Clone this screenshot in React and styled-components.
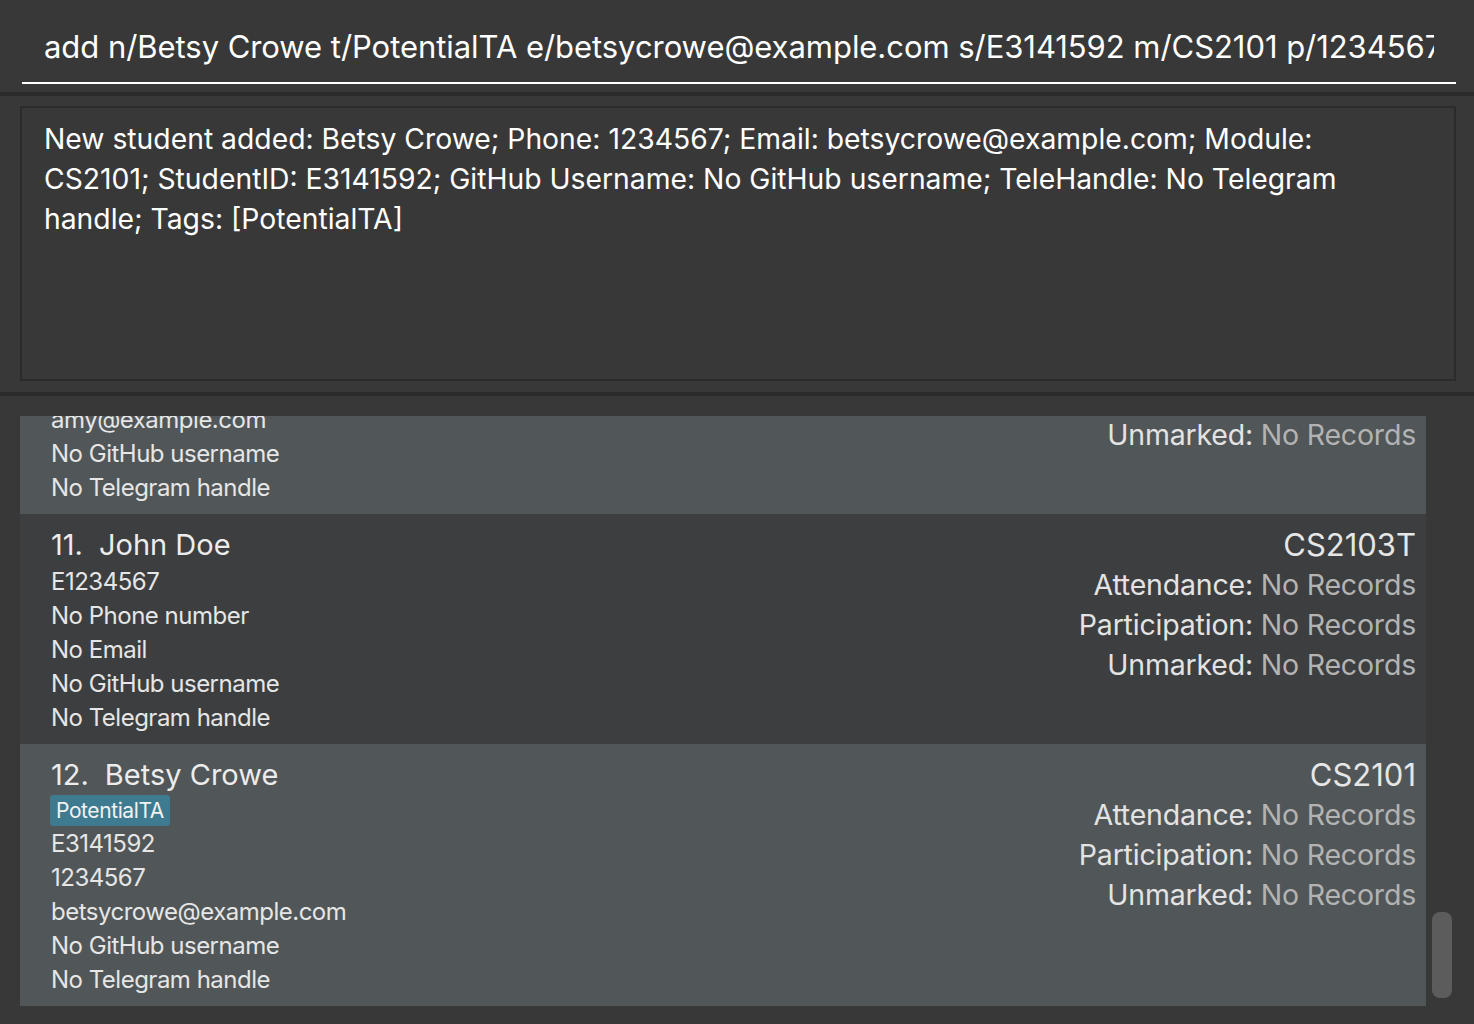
import React from 'react'
import styled, { createGlobalStyle } from 'styled-components'

const GlobalStyle = createGlobalStyle`
  html, body {
    margin: 0;
    padding: 0;
    background: #383838;
  }
  body {
    font-family: Inter, "Noto Sans", "Liberation Sans", sans-serif;
  }
`;

const Window = styled.div`
  width: 1474px;
  height: 1024px;
  background: #383838;
  display: flex;
  flex-direction: column;
  overflow: hidden;
`;

const CommandSection = styled.div`
  height: 92px;
  padding: 10px 18px 0 22px;
  box-sizing: border-box;
`;

const CommandField = styled.div`
  height: 72px;
  border-bottom: 2px solid #ffffff;
  padding-left: 22px;
  display: flex;
  align-items: center;
  overflow: hidden;
  white-space: nowrap;
  color: #ffffff;
  font-size: 31px;
  letter-spacing: -0.05px;
`;

const CommandText = styled.span`
  display: block;
  width: 1390px;
  overflow: hidden;
  flex-shrink: 0;
`;

const Divider = styled.div`
  height: 4px;
  background: #2b2b2b;
  flex-shrink: 0;
`;

const ResultSection = styled.div`
  padding: 10px 18px 11px 20px;
`;

const ResultBox = styled.div`
  height: 275px;
  box-sizing: border-box;
  border: 2px solid #2b2b2b;
  padding: 11px 84px 0 22px;
  color: #ffffff;
  font-size: 28.3px;
  line-height: 40px;
`;

const ListSection = styled.div`
  flex: 1;
  min-height: 0;
  display: flex;
  padding: 20px 0 18px 20px;
`;

const Viewport = styled.div`
  width: 1406px;
  overflow: hidden;
  display: flex;
  flex-direction: column;
  justify-content: flex-end;
`;

const ScrollTrack = styled.div`
  flex: 1;
  display: flex;
  flex-direction: column;
  justify-content: flex-end;
  padding: 0 0 8px 6px;
`;

const ScrollThumb = styled.div`
  width: 20px;
  height: 86px;
  border-radius: 8px;
  background: #5c5c5c;
`;

const Card = styled.div`
  flex-shrink: 0;
  display: flex;
  justify-content: space-between;
  padding: 11px 10px 9px 31px;
  background: ${p => (p.$odd ? '#515658' : '#3c3e3f')};
  color: #e6e6e6;
`;

const LeftCol = styled.div`
  display: flex;
  flex-direction: column;
`;

const NameLine = styled.div`
  font-size: 29px;
  line-height: 40px;
  color: #ececec;
`;

const Index = styled.span`
  margin-right: 16px;
`;

const TagRow = styled.div`
  height: 32px;
  display: flex;
  align-items: flex-start;
  margin-left: -1px;
`;

const Tag = styled.span`
  background: #3e7b91;
  color: #f2f2f2;
  font-size: 21px;
  line-height: 31px;
  padding: 0 6px;
  border-radius: 3px;
  letter-spacing: -0.4px;
`;

const Detail = styled.div`
  font-size: 24px;
  line-height: 34px;
  letter-spacing: -0.5px;
`;

const RightCol = styled.div`
  display: flex;
  flex-direction: column;
  align-items: flex-end;
  font-size: 28.5px;
  line-height: 40px;
  letter-spacing: -0.2px;
`;

const Module = styled.div`
  font-size: 31px;
  letter-spacing: 0;
  color: #e6e6e6;
`;

const Label = styled.span`
  color: #e3e3e3;
`;

const Value = styled.span`
  color: #b3b3b3;
`;

const students = [
  {
    index: 10,
    name: 'Amy Bee',
    tags: [],
    module: 'CS2103T',
    details: ['E0123456', '85355255', 'amy@example.com', 'No GitHub username', 'No Telegram handle'],
  },
  {
    index: 11,
    name: 'John Doe',
    tags: [],
    module: 'CS2103T',
    details: ['E1234567', 'No Phone number', 'No Email', 'No GitHub username', 'No Telegram handle'],
  },
  {
    index: 12,
    name: 'Betsy Crowe',
    tags: ['PotentialTA'],
    module: 'CS2101',
    details: ['E3141592', '1234567', 'betsycrowe@example.com', 'No GitHub username', 'No Telegram handle'],
  },
];

const records = ['Attendance', 'Participation', 'Unmarked'];

function StudentCard({ student }) {
  return (
    <Card $odd={student.index % 2 === 0}>
      <LeftCol>
        <NameLine>
          <Index>{student.index}.</Index>
          {student.name}
        </NameLine>
        {student.tags.length > 0 && (
          <TagRow>
            {student.tags.map(t => (
              <Tag key={t}>{t}</Tag>
            ))}
          </TagRow>
        )}
        {student.details.map((d, i) => (
          <Detail key={i}>{d}</Detail>
        ))}
      </LeftCol>
      <RightCol>
        <Module>{student.module}</Module>
        {records.map(r => (
          <div key={r}>
            <Label>{r}: </Label>
            <Value>No Records</Value>
          </div>
        ))}
      </RightCol>
    </Card>
  );
}

export default function App() {
  return (
    <Window>
      <GlobalStyle />
      <CommandSection>
        <CommandField>
          <CommandText>
            add n/Betsy Crowe t/PotentialTA e/betsycrowe@example.com s/E3141592 m/CS2101 p/1234567
          </CommandText>
        </CommandField>
      </CommandSection>
      <Divider />
      <ResultSection>
        <ResultBox>
          New student added: Betsy Crowe; Phone: 1234567; Email: betsycrowe@example.com; Module:
          CS2101; StudentID: E3141592; GitHub Username: No GitHub username; TeleHandle: No Telegram
          handle; Tags: [PotentialTA]
        </ResultBox>
      </ResultSection>
      <Divider />
      <ListSection>
        <Viewport>
          {students.map(s => (
            <StudentCard key={s.index} student={s} />
          ))}
        </Viewport>
        <ScrollTrack>
          <ScrollThumb />
        </ScrollTrack>
      </ListSection>
    </Window>
  );
}
